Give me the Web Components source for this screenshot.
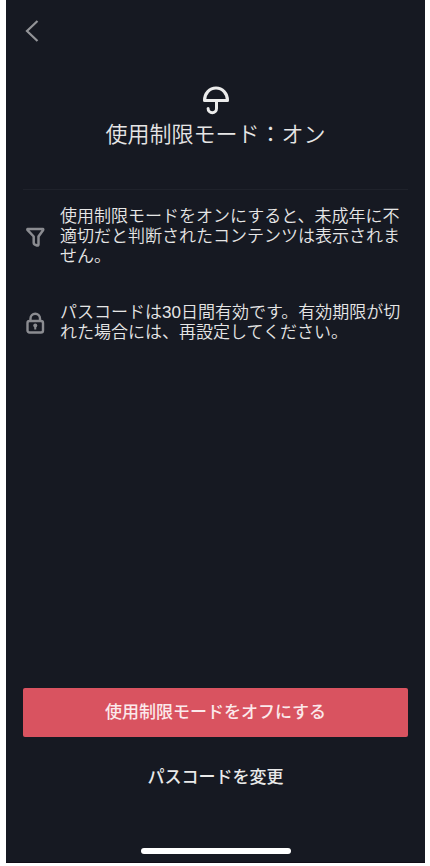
<!DOCTYPE html>
<html lang="ja">
<head>
<meta charset="utf-8">
<meta name="viewport" content="width=device-width, initial-scale=1">
<title>使用制限モード</title>
<style>
html, body { height: 100%; }
body {
  margin: 0; padding: 0 5px 3px 6px; box-sizing: border-box; background: #fff;
  font-family: "Liberation Sans", "Noto Sans CJK JP", sans-serif; color: #e6e6e6;
}
</style>
</head>
<body>
<restricted-screen></restricted-screen>
<script>
const define = (name, html) => {
  const template = document.createElement('template');
  template.innerHTML = html;
  customElements.define(name, class extends HTMLElement {
    constructor() {
      super();
      this.attachShadow({ mode: 'open' }).append(template.content.cloneNode(true));
    }
  });
};

define('nav-bar', `
<style>
:host { display: flex; height: 62px; align-items: center; }
button { display: flex; padding: 0; border: 0; background: none; color: #939498; }
svg { width: 18px; height: 24px; }
</style>
<button type="button" aria-label="戻る">
  <svg viewBox="0 0 18 24" fill="none" stroke="currentColor" stroke-width="2.200"><path d="M14.500 2L4 12l10.500 10"/></svg>
</button>`);

define('mode-header', `
<style>
:host { display: flex; flex-direction: column; align-items: center; padding: 23px 0 38px; border-bottom: 1px solid #1f222b; }
svg { width: 28px; height: 30px; }
h1 { margin: 4px 0 0; font-size: 22px; line-height: 32px; font-weight: 350; }
</style>
<svg viewBox="0 0 28 30" fill="none" stroke="#ececec" stroke-width="3" stroke-linejoin="round" stroke-linecap="round" aria-hidden="true">
  <path d="M2.500 15.500C2.500 8.500 7.500 3 14 3S25.500 8.500 25.500 15.500Z"/><path d="M14.500 16v7.500a4.200 4.200 0 0 1-8.400 0"/>
</svg>
<h1><slot></slot></h1>`);

define('info-row', `
<style>
:host { display: flex; align-items: center; gap: 13px; }
::slotted(svg) { width: 24px; height: 24px; flex: none; color: #8b8c91; }
p { margin: 0; font-size: 17px; line-height: 20px; font-weight: 350; }
</style>
<slot name="icon"></slot><p><slot></slot></p>`);

define('action-button', `
<style>
:host { display: block; }
button {
  width: 100%; padding: 14px 0; border: 0; border-radius: 2px; background: none; color: #e9e9e9;
  font: inherit; font-size: 17px; line-height: 21px; font-weight: 500;
}
:host([primary]) button { background: #d95360; color: #fbe9eb; }
</style>
<button type="button"><slot></slot></button>`);

define('home-indicator', `
<style>
:host { display: block; width: 150px; height: 6px; border-radius: 3px; background: #fff; align-self: center; }
</style>`);

define('restricted-screen', `
<style>
:host {
  display: flex; flex-direction: column; box-sizing: border-box; min-height: 100%;
  padding: 0 17px 8px; background: #161922; border-bottom: 1px solid #100d16;
}
.info { display: flex; flex-direction: column; gap: 36px; padding-top: 17px; }
.actions { display: flex; flex-direction: column; gap: 16px; margin: auto 0 46px; }
</style>
<nav-bar></nav-bar>
<mode-header>使用制限モード：オン</mode-header>
<div class="info">
  <info-row>
    <svg slot="icon" viewBox="0 0 24 24" fill="none" stroke="currentColor" stroke-width="2.500" stroke-linejoin="round" aria-hidden="true"><path d="M4.800 4h15a.6.6 0 0 1 .4.9L15.500 11.500V19.300c0 1-.7 1.500-1.500 1.200L11.500 19.300a1.500 1.500 0 0 1-.8-1.300V11.500L4.400 4.900a.6.6 0 0 1 .4-.9z"/></svg>
    使用制限モードをオンにすると、未成年に不適切だと判断されたコンテンツは表示されません。
  </info-row>
  <info-row>
    <svg slot="icon" viewBox="0 0 24 24" fill="none" stroke="currentColor" stroke-width="2.400" aria-hidden="true"><rect x="4.500" y="10" width="15.500" height="11.500" rx="2"/><path d="M7.500 10V7.500a4.750 4.750 0 0 1 9.500 0V10"/><circle cx="12.250" cy="14.500" r="2" fill="currentColor" stroke="none"/><path d="M12.250 15v3.500" stroke-width="2"/></svg>
    パスコードは30日間有効です。有効期限が切れた場合には、再設定してください。
  </info-row>
</div>
<div class="actions">
  <action-button primary>使用制限モードをオフにする</action-button>
  <action-button>パスコードを変更</action-button>
</div>
<home-indicator></home-indicator>`);
</script>
</body>
</html>
